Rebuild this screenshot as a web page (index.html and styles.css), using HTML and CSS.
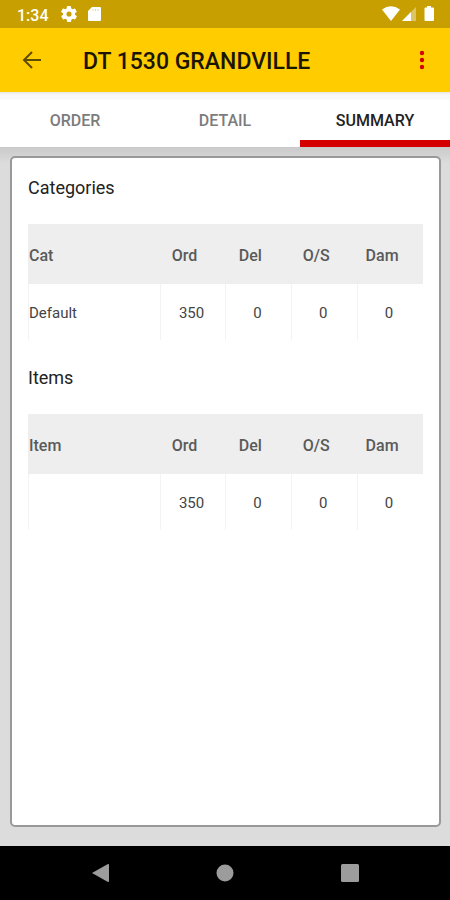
FILE: index.html
```html
<!DOCTYPE html>
<html lang="en">
<head>
<meta charset="utf-8">
<meta name="viewport" content="width=device-width, initial-scale=1">
<title>DT 1530 GRANDVILLE</title>
<link rel="stylesheet" href="styles.css">
</head>
<body>
<div class="status">
  <span class="clock">1:34</span>
  <svg class="gear" width="16" height="16" viewBox="2 2 20 20" aria-hidden="true"><path fill="#fff" d="M19.4 13c.1-.3.1-.6.1-1s0-.7-.1-1l2.1-1.600c.2-.2.200-.4.100-.6l-2-3.500c-.1-.2-.4-.3-.6-.2l-2.500 1c-.5-.4-1.100-.7-1.700-1l-.4-2.600c0-.3-.2-.5-.5-.5h-4c-.2 0-.4.200-.5.500l-.4 2.600c-.6.300-1.100.6-1.700 1l-2.500-1c-.2-.1-.5 0-.6.200l-2 3.500c-.1.200-.1.500.1.600L4.600 11c0 .3-.1.700-.1 1s0 .7.100 1l-2.100 1.600c-.2.200-.3.400-.1.600l2 3.500c.1.200.4.300.6.200l2.500-1c.5.400 1.100.8 1.700 1l.4 2.600c0 .3.200.5.500.5h4c.2 0 .5-.2.500-.5l.4-2.600c.6-.3 1.200-.6 1.700-1l2.500 1c.2.100.5 0 .6-.2l2-3.500c.1-.2.100-.5-.1-.6zM12 15.200a3.200 3.200 0 1 1 0-6.400 3.200 3.200 0 0 1 0 6.400z"/></svg>
  <svg class="card-icon" width="13" height="14" viewBox="0 0 13 14" aria-hidden="true"><path fill="#fff" d="M4 0h8a1 1 0 0 1 1 1v12a1 1 0 0 1-1 1H1a1 1 0 0 1-1-1V4z"/><path stroke="#c79f00" d="M5 2v2M7.500 2v2M10 2v2" opacity=".4"/></svg>
  <svg class="signals" width="54" height="16" viewBox="0 0 54 16" aria-hidden="true">
    <path fill="#fff" d="M0 3.500Q9-3 18 3.500L9 15z"/>
    <path fill="#fff" opacity=".4" d="M20 15L34 1v14z"/>
    <path fill="#fff" d="M20 15l9-9v9z"/>
    <path fill="#fff" d="M45 0h4v1.500h2a1 1 0 0 1 1 1V14a1 1 0 0 1-1 1h-7.500a1 1 0 0 1-1-1V2.500a1 1 0 0 1 1-1H45z"/>
  </svg>
</div>
<header class="toolbar">
  <button class="icon-button" type="button" aria-label="Back">
    <svg width="20" height="18" viewBox="0 0 20 18" fill="none" stroke="#5f4d00" stroke-width="2"><path d="M19 9H2M10 1L2 9l8 8"/></svg>
  </button>
  <h1>DT 1530 GRANDVILLE</h1>
  <button class="icon-button" type="button" aria-label="More options">
    <svg width="6" height="20" viewBox="0 0 6 20" fill="#d40000"><circle cx="3" cy="3" r="2.200"/><circle cx="3" cy="10" r="2.200"/><circle cx="3" cy="17" r="2.200"/></svg>
  </button>
</header>
<nav class="tabs">
  <a href="#order">ORDER</a>
  <a href="#detail">DETAIL</a>
  <a href="#summary" class="active" aria-current="page">SUMMARY</a>
</nav>
<main class="content">
  <section class="card">
    <h2>Categories</h2>
    <table>
      <thead><tr><th class="name">Cat</th><th>Ord</th><th>Del</th><th>O/S</th><th>Dam</th></tr></thead>
      <tbody><tr><td class="name">Default</td><td>350</td><td>0</td><td>0</td><td>0</td></tr></tbody>
    </table>
    <h2>Items</h2>
    <table>
      <thead><tr><th class="name">Item</th><th>Ord</th><th>Del</th><th>O/S</th><th>Dam</th></tr></thead>
      <tbody><tr><td class="name"></td><td>350</td><td>0</td><td>0</td><td>0</td></tr></tbody>
    </table>
  </section>
</main>
<footer class="system-nav">
  <button type="button" aria-label="Back"><svg width="20" height="20" viewBox="0 0 20 20" fill="#9c9c9c"><path d="M2 10L17.500 1.200Q19 .5 19 2v16q0 1.500-1.500.800z"/></svg></button>
  <button type="button" aria-label="Home"><svg width="20" height="20" viewBox="0 0 20 20" fill="#9c9c9c"><circle cx="10" cy="10" r="8.500"/></svg></button>
  <button type="button" aria-label="Recent apps"><svg width="20" height="20" viewBox="0 0 20 20" fill="#9c9c9c"><rect x="1" y="1" width="18" height="18" rx="1.500"/></svg></button>
</footer>
</body>
</html>
```
FILE: styles.css
```css
* {
  box-sizing: border-box;
}

body {
  margin: 0;
  min-height: 100vh;
  display: flex;
  flex-direction: column;
  background: #dcdcdc;
  color: #222;
  font-family: Roboto, "Liberation Sans", sans-serif;
}

button {
  border: 0;
  padding: 0;
  background: none;
  display: flex;
  align-items: center;
  justify-content: center;
}

h1,
h2 {
  margin: 0;
}

.status {
  height: 28px;
  padding: 0 14px 0 17px;
  display: flex;
  align-items: center;
  background: #c79f00;
  color: #fff;
}

.clock {
  padding-top: 2px;
  font-size: 16px;
  font-weight: 500;
}

.gear {
  margin-left: 12px;
}

.card-icon {
  margin-left: 11px;
}

.signals {
  margin-left: auto;
}

.toolbar {
  height: 64px;
  padding: 0 4px 0 8px;
  display: flex;
  align-items: center;
  background: #fc0;
}

.icon-button {
  width: 48px;
  height: 48px;
}

.toolbar h1 {
  flex: 1;
  margin-left: 27px;
  padding-top: 3px;
  color: #1a1500;
  font-size: 23px;
  font-weight: 500;
}

.tabs {
  height: 55px;
  display: flex;
  background: linear-gradient(#e8e8e0, #f7f7f7 3px, #f8f8f8 7px, #fff 8px);
}

.tabs a {
  flex: 1;
  display: flex;
  align-items: center;
  justify-content: center;
  border-bottom: 7px solid transparent;
  padding-top: 8px;
  color: #7c7c7c;
  font-size: 16px;
  font-weight: 500;
  text-decoration: none;
}

.tabs .active {
  border-color: #d40000;
  color: #222;
}

.content {
  flex: 1;
  display: flex;
  padding: 9px 9px 19px 10px;
  background: linear-gradient(#cacaca, #d2d2d2 8px, #dcdcdc 16px);
}

.card {
  flex: 1;
  padding: 18px 16px;
  border: 2px solid #999;
  border-radius: 5px;
  background: #fff;
}

.card h2 {
  margin-bottom: 24px;
  font-size: 18px;
  line-height: 24px;
  font-weight: 400;
}

table {
  width: 100%;
  margin-bottom: 26px;
  border-collapse: separate;
  border-spacing: 0;
  table-layout: fixed;
}

th {
  height: 60px;
  padding: 2px 16px 0 0;
  background: #eee;
  color: #5a5a5a;
  font-size: 16px;
  font-weight: 500;
}

td {
  height: 56px;
  padding: 2px 3px 0 0;
  border-left: 1px solid #f3f3f3;
  color: #444;
  font-size: 15px;
  text-align: center;
}

.name {
  width: 33.333%;
  padding-left: 1px;
  text-align: left;
}

td.name {
  padding-left: 0;
}

.system-nav {
  height: 54px;
  padding: 0 38px;
  display: flex;
  background: #000;
}

.system-nav button {
  flex: 1;
}
```
